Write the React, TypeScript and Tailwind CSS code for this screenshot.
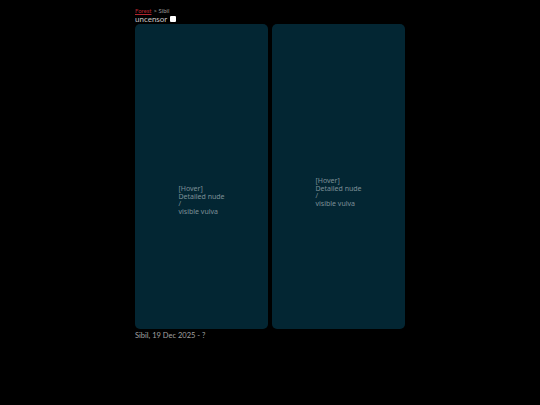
export default function App() {
  return (
    <div className="min-h-[405px] w-full bg-black font-['Lato',sans-serif] text-[#c8c8c8]">
      <div className="mx-auto w-[270px] pt-[7px]">
        <div className="flex items-center gap-[2px] text-[6px] leading-[8px]">
          <a className="text-[#b3262f] underline">Forest</a>
          <span className="text-[#9a9a9a]">&gt; Sibil</span>
        </div>
        <div className="flex items-center gap-[3px] text-[8px] leading-[8px]">
          <span>uncensor</span>
          <span className="inline-block h-[6px] w-[6px] rounded-[1px] bg-white" />
        </div>
        <div className="mt-[1px] grid grid-cols-2 gap-[4px]">
          <div className="flex h-[305px] justify-center rounded-[5px] bg-[#032633] pt-[161px]">
            <div className="font-['Noto_Sans',sans-serif] text-[7px] leading-[7.7px] text-[#7d9098]">
              [Hover]
              <br />
              Detailed nude
              <br />/
              <br />
              visible vulva
            </div>
          </div>
          <div className="flex h-[305px] justify-center rounded-[5px] bg-[#032633] pt-[153px]">
            <div className="font-['Noto_Sans',sans-serif] text-[7px] leading-[7.7px] text-[#7d9098]">
              [Hover]
              <br />
              Detailed nude
              <br />/
              <br />
              visible vulva
            </div>
          </div>
        </div>
        <div className="mt-[2px] text-[7.5px] leading-[10px] text-[#a0a0a0]">Sibil, 19 Dec 2025 - ?</div>
      </div>
    </div>
  );
}
